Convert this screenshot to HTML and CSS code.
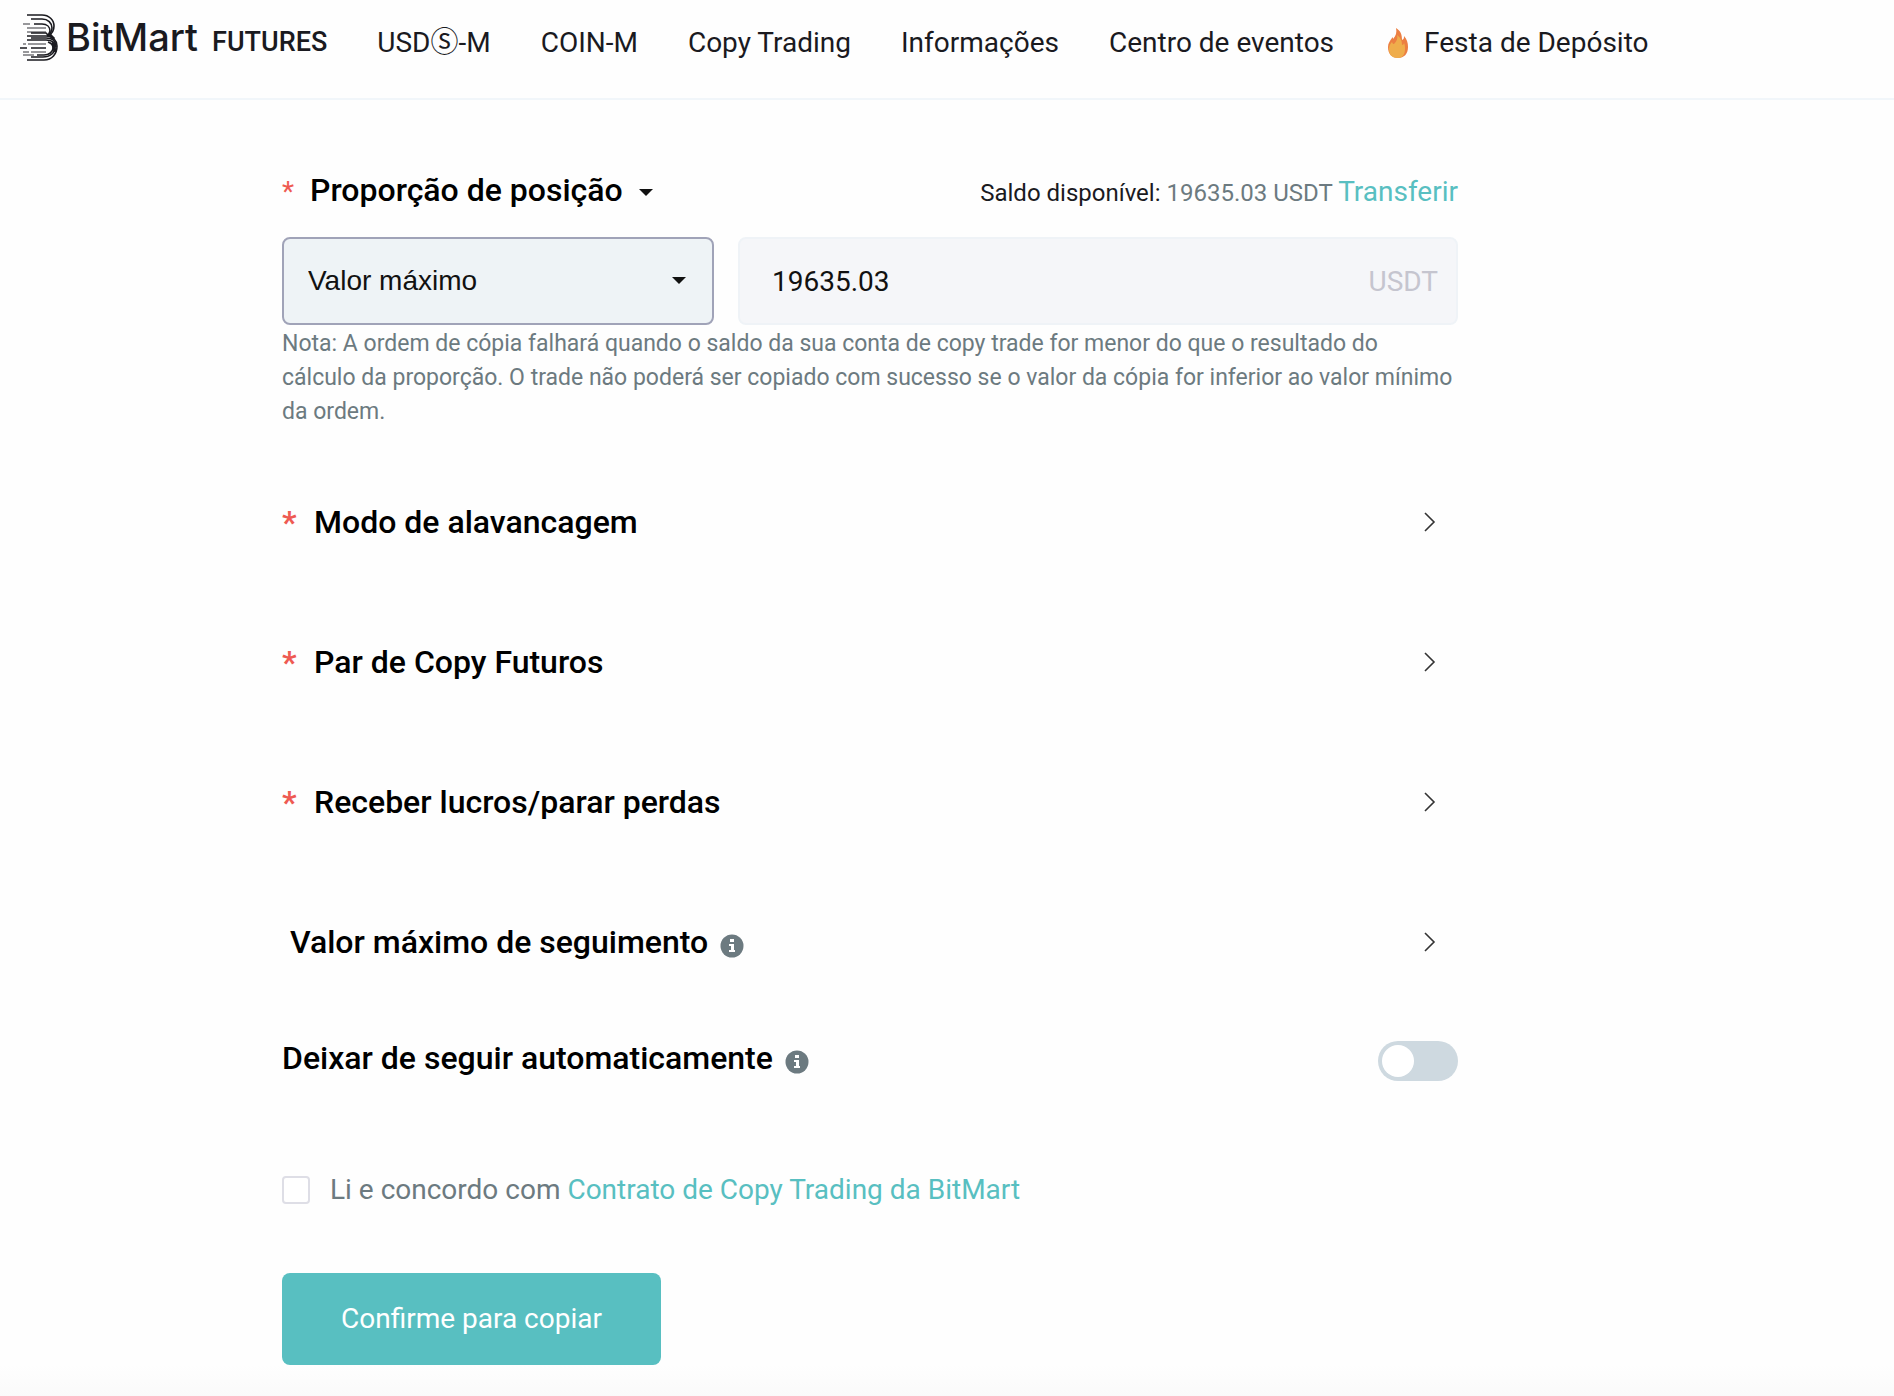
FILE: index.html
```html
<!DOCTYPE html>
<html lang="pt">

<head>
  <meta charset="UTF-8" />
  <title>BitMart Futures</title>
  <link rel="stylesheet" href="styles.css">
</head>

<body>
  <header class="header">
    <a class="logo" href="#">
      <svg class="logo-mark" width="40" height="48" viewBox="0 0 40 48" fill="none" stroke="#1a1a1f" stroke-width="1.6">
        <path d="M7 1H22C29 1 34 6 34 12C34 17 32 20 28 22" />
        <path d="M11 5H22C28 5 32 9 32 14C32 18 30 20 27 22" />
        <path d="M14 10H22C27 10 30 13 30 17L28 22" />
        <path d="M3 10H10M7 14H26M7 18H26" stroke="#77777b" />
        <path d="M11 19H26L29 22" />
        <path d="M7 22H26C33 22 37 27 37 32C37 40 32 46 24 46H7" />
        <path d="M7 26H26C32 26 35 29 35 33C35 39 30 43 23 43H11" />
        <path d="M11 24H26C33 24 36 28 36 33" />
        <path d="M28 28C31 29 33 31 33 34C33 38 29 41 24 41H17" />
        <path d="M8 30H26M3 30H6" stroke="#77777b" />
        <path d="M0 34H7M11 34H26" />
        <path d="M3 38H9M11 38H26M3 41H14" stroke="#77777b" />
        <path d="M29 20L34 25M33 28L35 38" stroke-width="3" />
      </svg>
      <span class="logo-name">BitMart</span>
      <span class="logo-sub">FUTURES</span>
    </a>
    <nav class="nav">
      <a href="#">USDⓈ-M</a>
      <a href="#">COIN-M</a>
      <a href="#">Copy Trading</a>
      <a href="#">Informações</a>
      <a href="#">Centro de eventos</a>
      <a class="hot" href="#">
        <svg width="28" height="32" viewBox="0 0 28 32">
          <path fill="#ec7f42" d="M12 1C17 4 18 8 18 13C20 12 20 11 20 9C23 12 24 16 24 20C24 27 20 31 14 31C8 31 4 27 4 20C4 16 6 14 8 11C9 9 9 11 9 12C12 9 13 5 12 1Z" />
          <path fill="#efad4b" d="M13 8C17 11 18 14 18 18C19 18 20 17 20 16C21 18 21 20 21 22C21 28 18 31 14 31C8 31 5 28 5 22C5 18 7 16 8 15C9 17 9 17 10 17C13 14 14 11 13 8Z" />
        </svg>
        Festa de Depósito
      </a>
    </nav>
  </header>

  <main class="form">
    <div class="top">
      <h2 class="title"><span class="star small">*</span>Proporção de posição <i class="caret"></i></h2>
      <p class="balance">Saldo disponível: <span>19635.03 USDT</span> <a href="#">Transferir</a></p>
    </div>
    <div class="fields">
      <div class="select">
        <select aria-label="Proporção de posição">
          <option>Valor máximo</option>
        </select>
        <i class="caret"></i>
      </div>
      <label class="amount">
        <input type="text" value="19635.03" aria-label="Valor máximo">
        <span>USDT</span>
      </label>
    </div>
    <p class="note">Nota: A ordem de cópia falhará quando o saldo da sua conta de copy trade for menor do que o resultado do<br>
      cálculo da proporção. O trade não poderá ser copiado com sucesso se o valor da cópia for inferior ao valor mínimo<br>
      da ordem.</p>

    <div class="rows">
      <button class="row" type="button">
        <span class="star">*</span>Modo de alavancagem
        <svg class="arrow" width="12" height="20" viewBox="0 0 12 20"><path d="M1 1L10 10L1 19" /></svg>
      </button>
      <button class="row" type="button">
        <span class="star">*</span>Par de Copy Futuros
        <svg class="arrow" width="12" height="20" viewBox="0 0 12 20"><path d="M1 1L10 10L1 19" /></svg>
      </button>
      <button class="row" type="button">
        <span class="star">*</span>Receber lucros/parar perdas
        <svg class="arrow" width="12" height="20" viewBox="0 0 12 20"><path d="M1 1L10 10L1 19" /></svg>
      </button>
      <button class="row optional" type="button">
        Valor máximo de seguimento
        <svg class="info" width="24" height="24" viewBox="0 0 24 24"><circle cx="12" cy="12" r="11.5" /><path d="M10 5H14V8H10ZM9 10H14V16H15V18H9V16H11V12H9Z" /></svg>
        <svg class="arrow" width="12" height="20" viewBox="0 0 12 20"><path d="M1 1L10 10L1 19" /></svg>
      </button>
    </div>

    <div class="auto">
      <label for="auto">Deixar de seguir automaticamente</label>
      <svg class="info" width="24" height="24" viewBox="0 0 24 24"><circle cx="12" cy="12" r="11.5" /><path d="M10 5H14V8H10ZM9 10H14V16H15V18H9V16H11V12H9Z" /></svg>
      <input class="switch" type="checkbox" id="auto">
    </div>

    <div class="agree">
      <input type="checkbox" id="agree">
      <label for="agree">Li e concordo com <a href="#">Contrato de Copy Trading da BitMart</a></label>
    </div>

    <button class="submit" type="submit">Confirme para copiar</button>
  </main>
  <div class="fade"></div>
</body>

</html>
```

FILE: styles.css
```css
* {
  box-sizing: border-box;
  margin: 0;
  padding: 0;
}

body {
  background: #fefefe;
  color: #1a1a1f;
  font-family: Roboto, "Noto Sans", "Noto Sans CJK SC", sans-serif;
  font-size: 28px;
  line-height: 40px;
}

a {
  color: #58bfc1;
  text-decoration: none;
}

button,
input,
select {
  font: inherit;
  color: inherit;
  border: 0;
  background: none;
  appearance: none;
}

.header {
  display: flex;
  height: 100px;
  padding: 14px 20px 0;
  border-bottom: 2px solid #f1f6fa;
}

.header a {
  color: #1a1a1f;
  white-space: nowrap;
}

.logo {
  display: flex;
  align-items: baseline;
}

.logo-mark {
  align-self: flex-start;
  margin-right: 6px;
}

.logo-name {
  font-family: Inter, sans-serif;
  font-size: 38px;
  font-weight: 500;
  line-height: 46px;
}

.logo-sub {
  margin-left: 14px;
  font-size: 27px;
  font-weight: 500;
}

.nav {
  display: flex;
  gap: 50px;
  margin-left: 50px;
  padding-top: 9px;
}

.hot {
  display: flex;
}

.hot svg {
  margin: 4px 12px 0 0;
}

.form {
  max-width: 1458px;
  padding: 66px 0 0 282px;
}

.top {
  display: flex;
  justify-content: space-between;
  align-items: baseline;
  line-height: 48px;
}

.title,
.row,
.auto {
  color: #000;
  font-size: 32px;
  font-weight: 500;
}

.star {
  width: 32px;
  color: #ee5a52;
  font-weight: 700;
  text-align: left;
}

.small {
  display: inline-block;
  width: 28px;
  font-size: 28px;
  font-weight: 400;
}

.caret {
  display: inline-block;
  margin-left: 8px;
  border: 7px solid transparent;
  border-top-color: #111;
  border-bottom: 0;
  vertical-align: middle;
}

.balance {
  font-size: 24px;
}

.balance span {
  color: #6c7a80;
}

.balance a {
  font-size: 28px;
}

.fields {
  display: grid;
  grid-template-columns: 3fr 5fr;
  gap: 24px;
  margin-top: 20px;
}

.select {
  position: relative;
}

.select select {
  width: 100%;
  height: 88px;
  padding: 0 24px;
  border: 2px solid #a0a3b8;
  border-radius: 8px;
  background: #eef3f6;
  color: #111;
  font-family: "Liberation Sans", sans-serif;
}

.select .caret {
  position: absolute;
  right: 28px;
  top: 40px;
}

.amount {
  display: flex;
  align-items: center;
  height: 88px;
  padding: 2px 18px 0 32px;
  border: 2px solid #eff3f7;
  border-radius: 8px;
  background: #f5f6f9;
  color: #111;
}

.amount input {
  flex: 1;
  min-width: 0;
}

.amount span {
  color: #c5c5cf;
}

.note {
  padding-top: 2px;
  color: #6c7a80;
  font-size: 23px;
  line-height: 34px;
}

.rows {
  display: grid;
  gap: 92px;
  margin-top: 69px;
}

.row {
  display: flex;
  align-items: center;
  width: 100%;
  height: 48px;
  padding-right: 22px;
  text-align: left;
  cursor: pointer;
}

.optional {
  padding-left: 8px;
}

.arrow {
  margin-left: auto;
  fill: none;
  stroke: #333;
  stroke-width: 1.6;
}

.info {
  margin: 8px 0 0 12px;
  fill: #6c7a80;
}

.info path {
  fill: #fff;
}

.auto {
  display: flex;
  align-items: center;
  height: 48px;
  margin-top: 68px;
}

.switch {
  width: 80px;
  height: 40px;
  margin: 6px 0 0 auto;
  padding: 4px;
  border-radius: 20px;
  background: #ced9e0;
}

.switch::before {
  content: "";
  display: block;
  width: 32px;
  height: 32px;
  border-radius: 50%;
  background: #fff;
}

.switch:checked::before {
  margin-left: auto;
}

.agree {
  display: flex;
  align-items: center;
  margin-top: 88px;
  color: #6c7a80;
}

.agree input {
  width: 28px;
  height: 28px;
  margin-right: 20px;
  border: 2px solid #dedee6;
  border-radius: 4px;
  background: #fff;
}

.agree input:checked {
  background: #58bfc1;
}

.submit {
  height: 92px;
  margin-top: 63px;
  padding: 0 59px;
  border-radius: 8px;
  background: #58bfc1;
  color: #fff;
  cursor: pointer;
}

.fade {
  height: 32px;
  background: linear-gradient(#fefefe, #fafafa);
}
```
